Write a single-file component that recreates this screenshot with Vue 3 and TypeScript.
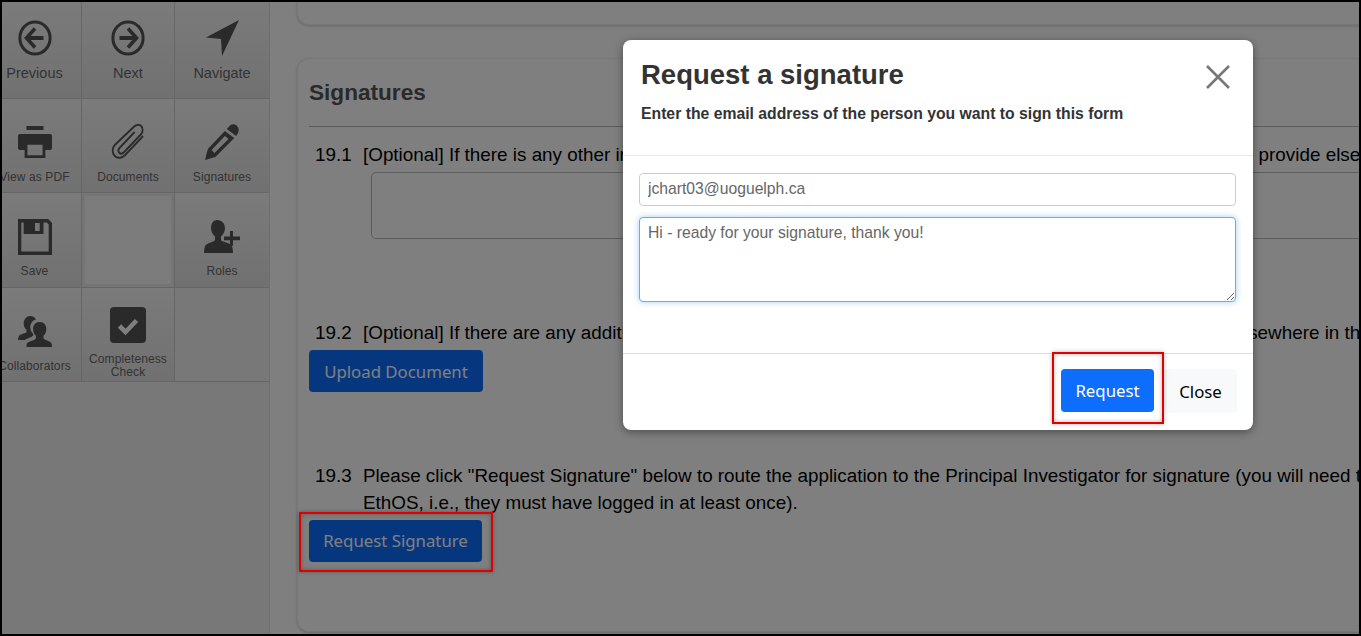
<script setup lang="ts">
interface Tool {
  label: string
  icon: string
  big?: boolean
}

const tools: Tool[] = [
  { label: "Previous", icon: "prev", big: true },
  { label: "Next", icon: "next", big: true },
  { label: "Navigate", icon: "nav", big: true },
  { label: "View as PDF", icon: "print" },
  { label: "Documents", icon: "clip" },
  { label: "Signatures", icon: "pencil" },
  { label: "Save", icon: "save" },
  { label: "", icon: "blank" },
  { label: "Roles", icon: "roles" },
  { label: "Collaborators", icon: "users" },
  { label: "Completeness Check", icon: "check" },
  { label: "", icon: "none" },
]
</script>

<template>
  <div class="page">
    <aside class="side">
      <div class="tools">
        <div v-for="t in tools" :key="t.icon" class="tool" :class="[`t-${t.icon}`, { big: t.big }]">
          <svg v-if="t.label" class="ico" viewBox="0 0 36 36" preserveAspectRatio="none">
            <template v-if="t.icon === 'prev'">
              <circle cx="18" cy="18" r="16" fill="none" stroke="#555" stroke-width="3.2" />
              <path d="M18 8.500 9 18l9 9.500M10 18h17" fill="none" stroke="#555" stroke-width="3.8" />
            </template>
            <template v-else-if="t.icon === 'next'">
              <circle cx="18" cy="18" r="16" fill="none" stroke="#555" stroke-width="3.2" />
              <path d="M18 8.500 27 18l-9 9.500M26 18H9" fill="none" stroke="#555" stroke-width="3.8" />
            </template>
            <path v-else-if="t.icon === 'nav'" d="M36 0 1 17.500l16 1.500 1 17z" fill="#555" />
            <path
              v-else-if="t.icon === 'print'"
              fill="#555"
              fill-rule="evenodd"
              d="M9 0h18v4.500H9zM2 9h32a2 2 0 0 1 2 2v14a2 2 0 0 1-2 2h-5v9H7v-9H2a2 2 0 0 1-2-2V11a2 2 0 0 1 2-2zM10 21v12h16V21z"
            />
            <path
              v-else-if="t.icon === 'clip'"
              fill="none"
              stroke="#555"
              stroke-width="1.9"
              d="M34 12 15 31c-3 3-8 4-11 1-3-3-3-8 0-11L24 3c2-2 6-3 8-1 2 2 2 6 0 8L14 28c-2 2-4 2-5 1-2-2-1-4 0-5L25 8"
            />
            <path
              v-else-if="t.icon === 'pencil'"
              fill="#555"
              fill-rule="evenodd"
              d="M27 1c2-1 5-1 7 1s2 5 1 7l-2 3-10-7zM21 7l10 7-20 19-11 3 3-11zM21 12 7 26l3 3 15-14z"
            />
            <path
              v-else-if="t.icon === 'save'"
              fill="#555"
              fill-rule="evenodd"
              d="M0 0h32l4 4v32H0zM3.500 3.500v29h29V5.500l-2-2H27V15H6V3.500zM18 4v8h5V4z"
            />
            <path
              v-else-if="t.icon === 'roles'"
              fill="#555"
              d="M13 0c5 0 8 4 8 9 0 4-2 7-4 9v4c2 2 8 3 10 5 1 1 2 4 2 9H0c0-5 1-8 2-9 2-2 7-3 9-5v-4C9 16 7 13 7 9c0-5 2-9 6-9zM26 12h3v6h7v4h-7v6h-3v-6h-6v-4h6z"
            />
            <path
              v-else-if="t.icon === 'users'"
              fill="#555"
              d="M13 0c3 0 5 2 6 4-4 1-6 5-6 9 0 3 1 5 3 8v2c-2 2-7 3-9 5H0c0-3 1-5 2-6 2-1 6-2 7-3v-3c-2-2-3-4-3-7 0-5 3-9 7-9zM23 7c5 0 7 4 7 8s-1 6-3 8v3c2 2 7 3 8 5 1 1 1 3 1 5H9c0-2 0-4 1-5 2-2 8-3 9-5v-3c-2-2-3-4-3-8s2-8 7-8z"
            />
            <template v-else-if="t.icon === 'check'">
              <rect width="36" height="36" rx="4" fill="#555" />
              <path d="M9.500 19l6 6 11-11.500" fill="none" stroke="#fff" stroke-width="4.600" />
            </template>
          </svg>
          <span class="lbl">{{ t.label }}</span>
        </div>
      </div>
    </aside>

    <main class="main">
      <div class="card top-card"></div>
      <section class="card sig-card">
        <h2 class="sig-title">Signatures</h2>
        <div class="q q1">
          <span class="num">19.1</span>
          <div class="qbody">
            <p>[Optional] If there is any other information relevant to your application that you have not yet got a chance to provide elsewhere in this form</p>
            <div class="box"></div>
          </div>
        </div>
        <div class="q q2">
          <span class="num">19.2</span>
          <div class="qbody">
            <p>[Optional] If there are any additional documents relevant to your application that have not been provided elsewhere in this form</p>
          </div>
        </div>
        <button class="btn dark upload">Upload Document</button>
        <div class="q q3">
          <span class="num">19.3</span>
          <div class="qbody">
            <p>Please click "Request Signature" below to route the application to the Principal Investigator for signature (you will need the<br />EthOS, i.e., they must have logged in at least once).</p>
          </div>
        </div>
        <button class="btn dark reqsig">Request Signature</button>
      </section>
    </main>

    <div class="backdrop"></div>

    <div class="modal">
      <header class="m-head">
        <div>
          <h1>Request a signature</h1>
          <p>Enter the email address of the person you want to sign this form</p>
        </div>
        <svg class="x" viewBox="0 0 24 24"><path d="M1 1l22 22M23 1 1 23" stroke="#777" stroke-width="2.6" fill="none" /></svg>
      </header>
      <div class="m-body">
        <input class="field" value="jchart03@uoguelph.ca" />
        <textarea class="field area">Hi - ready for your signature, thank you!</textarea>
      </div>
      <footer class="m-foot">
        <button class="btn primary">Request</button>
        <button class="btn light">Close</button>
      </footer>
    </div>

    <div class="mark mark-a"></div>
    <div class="mark mark-b"></div>
  </div>
</template>

<style>
html,
body {
  margin: 0;
  overflow: hidden;
}
</style>

<style scoped>
.page {
  position: relative;
  width: 1361px;
  height: 636px;
  box-sizing: border-box;
  display: flex;
  overflow: hidden;
  background: #fff;
  border: 2px solid #000;
  font-family: "Liberation Sans", Arial, sans-serif;
  color: #000;
}

.side {
  width: 268px;
  flex: none;
  box-sizing: border-box;
  overflow: hidden;
  background: #f0f0f0;
  border-right: 1px solid #dcdcdc;
}

.tools {
  display: grid;
  margin-left: -14px;
  grid-template-columns: 94px 93px 94px;
  grid-template-rows: 97px 94px 95px 94px;
}

.tool {
  box-sizing: border-box;
  display: flex;
  flex-direction: column;
  align-items: center;
  border-right: 1px solid #ccc;
  border-bottom: 1px solid #ccc;
  background: linear-gradient(#f6f6f6, #e2e2e2);
  font-size: 12px;
  letter-spacing: 0.1px;
  color: #666;
  padding-top: 25px;
  min-width: 0;
}

.tool:nth-child(3n) {
  border-right: 0;
}

.tool.big {
  font-size: 14.5px;
  letter-spacing: 0;
  padding-top: 18px;
}

.t-print {
  padding-top: 27px;
}

.t-save {
  padding-top: 26px;
}

.t-roles {
  padding-top: 27px;
}

.t-users {
  padding-top: 28px;
}

.t-check {
  padding-top: 19px;
}

.t-blank {
  background: #f8f8f8;
  box-shadow: inset 0 0 0 3px #eaeaea;
}

.t-none {
  background: #f0f0f0;
}

.ico {
  width: 34px;
  height: 36px;
  flex: none;
}

.t-print .ico {
  height: 32px;
}

.t-roles .ico {
  width: 36px;
  height: 33px;
}

.t-users .ico {
  height: 31px;
}

.t-check .ico {
  width: 36px;
}

.lbl {
  margin-top: 10px;
  line-height: 14px;
  text-align: center;
  white-space: nowrap;
}

.big .lbl {
  margin-top: 9px;
  line-height: 16px;
}

.t-print .lbl {
  margin-top: 12px;
}

.t-save .lbl {
  margin-top: 9px;
}

.t-roles .lbl {
  margin-top: 11px;
}

.t-users .lbl {
  margin-top: 12px;
}

.t-check .lbl {
  white-space: normal;
  margin-top: 10px;
  line-height: 13px;
  width: 88px;
}

.main {
  flex: 1;
  min-width: 0;
  background: #fff;
  padding-left: 27px;
  position: relative;
}

.card {
  box-sizing: border-box;
  margin-right: -40px;
  border: 1px solid #eee;
  border-radius: 12px;
  box-shadow: 0 1px 3px rgba(0, 0, 0, 0.2);
  background: #fff;
}

.top-card {
  height: 24px;
  margin-top: -1px;
  border-top: 0;
  border-radius: 0 0 12px 12px;
}

.sig-card {
  margin-top: 33px;
  height: 574px;
  padding: 0 11px;
  overflow: hidden;
}

.sig-title {
  margin: 0;
  padding: 20px 0 20px;
  font-size: 22.6px;
  line-height: 27px;
  color: #555;
  border-bottom: 1px solid #bbb;
  white-space: nowrap;
}

.q {
  display: flex;
  font-size: 18.85px;
  line-height: 27px;
  white-space: nowrap;
}

.num {
  width: 54px;
  padding-left: 6px;
  box-sizing: border-box;
  flex: none;
}

.qbody p {
  margin: 0;
}

.q1 {
  margin-top: 14px;
}

.box {
  width: 1000px;
  height: 65px;
  margin: 4px 0 0 8px;
  border: 1px solid #bbb;
  border-radius: 5px;
}

.q2 {
  margin-top: 80px;
}

.btn {
  display: block;
  font-family: "Noto Sans", "Open Sans", sans-serif;
  font-size: 16.8px;
  border: 0;
  border-radius: 4px;
  padding: 0;
}

.dark {
  background: #0d6efd;
  color: #fff;
  width: 174px;
  height: 42px;
}

.upload {
  margin-top: 4px;
}

.q3 {
  margin-top: 70px;
}

.reqsig {
  margin-top: 4px;
  width: 173px;
  padding-bottom: 2px;
}

.backdrop {
  position: absolute;
  inset: 0;
  background: rgba(0, 0, 0, 0.5);
}

.modal {
  position: absolute;
  left: 621px;
  top: 38px;
  width: 630px;
  height: 390px;
  display: flex;
  flex-direction: column;
  background: #fff;
  border-radius: 8px;
  box-shadow: 0 2px 8px rgba(0, 0, 0, 0.4);
}

.m-head {
  display: flex;
  justify-content: space-between;
  height: 116px;
  flex: none;
  box-sizing: border-box;
  padding: 19px 24px 0 18px;
  border-bottom: 1px solid #e9e9e9;
}

.m-head h1 {
  margin: 0;
  font-size: 27.5px;
  line-height: 32px;
  color: #333;
}

.m-head p {
  margin: 13px 0 0;
  font-size: 15.76px;
  line-height: 20px;
  font-weight: bold;
  color: #333;
}

.x {
  width: 24px;
  height: 24px;
  margin-top: 6px;
  margin-right: -1px;
}

.m-body {
  flex: 1;
  display: flex;
  flex-direction: column;
  gap: 11px;
  padding: 17px 17px 0 16px;
}

.field {
  box-sizing: border-box;
  width: 100%;
  height: 33px;
  flex: none;
  border: 1px solid #ccc;
  border-radius: 4px;
  padding: 0 8px 2px;
  font-family: "Liberation Sans", Arial, sans-serif;
  font-size: 15.7px;
  color: #666;
  outline: none;
}

.area {
  height: 85px;
  padding-top: 6px;
  border-color: #66afe9;
  box-shadow: 0 0 6px rgba(102, 175, 233, 0.6);
}

.m-foot {
  height: 77px;
  flex: none;
  box-sizing: border-box;
  display: flex;
  align-items: flex-start;
  justify-content: flex-end;
  gap: 10px;
  padding: 15px 16px 0 0;
  border-top: 1px solid #dedede;
}

.primary {
  background: #0d6efd;
  color: #fff;
  width: 93px;
  height: 43px;
}

.light {
  background: #f8f9fa;
  color: #000;
  width: 73px;
  height: 44px;
}

.mark {
  position: absolute;
  box-sizing: border-box;
  border: 2px solid #e00000;
  box-shadow: 0 0 4px rgba(0, 0, 0, 0.3), inset 0 0 4px rgba(0, 0, 0, 0.3);
}

.mark-a {
  left: 1050px;
  top: 350px;
  width: 112px;
  height: 72px;
}

.mark-b {
  left: 297px;
  top: 510px;
  width: 194px;
  height: 60px;
}
</style>
